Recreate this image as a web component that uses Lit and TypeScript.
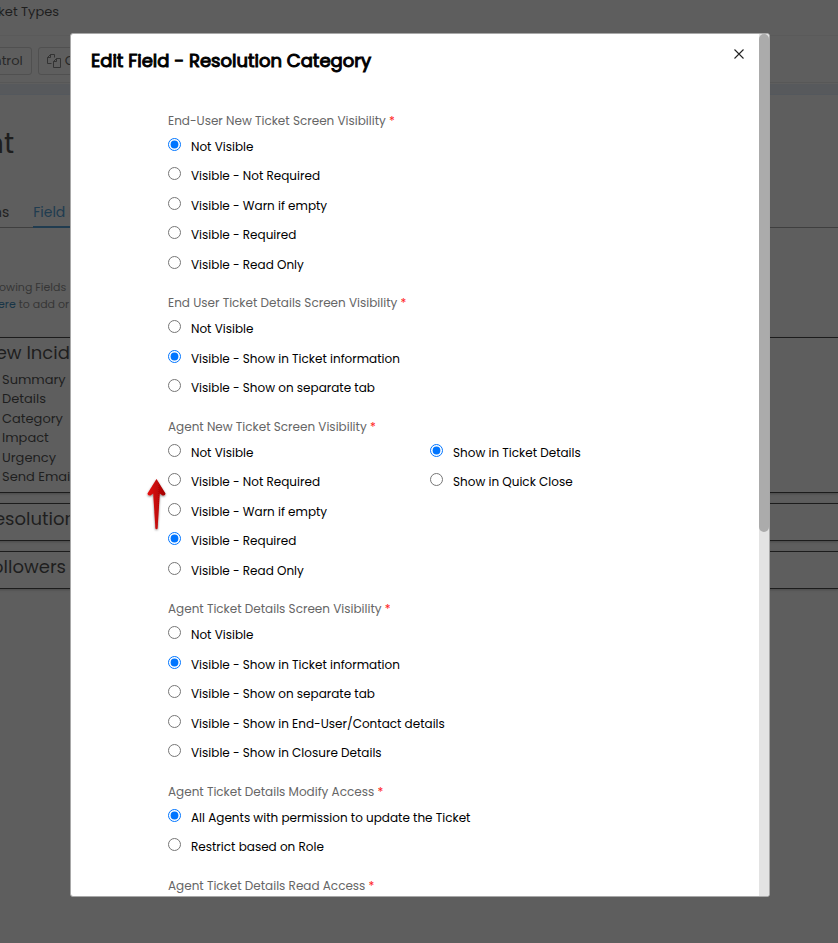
import { LitElement, html, css } from "lit";
import { customElement, property } from "lit/decorators.js";

interface Choices {
  name: string;
  selected: number;
  options: string[];
}

interface Field {
  label: string;
  columns: Choices[];
}

const fields: Field[] = [
  {
    label: "End-User New Ticket Screen Visibility",
    columns: [
      {
        name: "user-new",
        selected: 0,
        options: [
          "Not Visible",
          "Visible - Not Required",
          "Visible - Warn if empty",
          "Visible - Required",
          "Visible - Read Only",
        ],
      },
    ],
  },
  {
    label: "End User Ticket Details Screen Visibility",
    columns: [
      {
        name: "user-details",
        selected: 1,
        options: [
          "Not Visible",
          "Visible - Show in Ticket information",
          "Visible - Show on separate tab",
        ],
      },
    ],
  },
  {
    label: "Agent New Ticket Screen Visibility",
    columns: [
      {
        name: "agent-new",
        selected: 3,
        options: [
          "Not Visible",
          "Visible - Not Required",
          "Visible - Warn if empty",
          "Visible - Required",
          "Visible - Read Only",
        ],
      },
      {
        name: "agent-new-place",
        selected: 0,
        options: ["Show in Ticket Details", "Show in Quick Close"],
      },
    ],
  },
  {
    label: "Agent Ticket Details Screen Visibility",
    columns: [
      {
        name: "agent-details",
        selected: 1,
        options: [
          "Not Visible",
          "Visible - Show in Ticket information",
          "Visible - Show on separate tab",
          "Visible - Show in End-User/Contact details",
          "Visible - Show in Closure Details",
        ],
      },
    ],
  },
  {
    label: "Agent Ticket Details Modify Access",
    columns: [
      {
        name: "agent-modify",
        selected: 0,
        options: [
          "All Agents with permission to update the Ticket",
          "Restrict based on Role",
        ],
      },
    ],
  },
  {
    label: "Agent Ticket Details Read Access",
    columns: [],
  },
];

@customElement("radio-field")
class RadioField extends LitElement {
  @property({ attribute: false }) field!: Field;

  static styles = css`
    :host {
      display: block;
    }
    .group {
      margin: 0;
      padding: 0 0 9px;
      border: 0;
      min-width: 0;
    }
    .legend {
      display: block;
      padding: 0;
      height: 26px;
      line-height: 20px;
      font-size: 12px;
      color: #666;
      white-space: nowrap;
    }
    .star {
      color: #f22;
    }
    .columns {
      display: grid;
      grid-template-columns: 262px 1fr;
    }
    .option {
      display: flex;
      align-items: flex-start;
      gap: 10px;
      height: 29px;
      line-height: 20px;
      color: #000;
      white-space: nowrap;
    }
    .option:nth-child(even) {
      height: 30px;
    }
    :host(:nth-child(even)) .option:nth-child(odd) {
      height: 30px;
    }
    :host(:nth-child(even)) .option:nth-child(even) {
      height: 29px;
    }
    .radio {
      flex: none;
      width: 13px;
      height: 13px;
      margin: 1px 0 0;
      accent-color: #0075ff;
    }
  `;

  render() {
    return html`<fieldset class="group">
      <legend class="legend">
        ${this.field.label} <span class="star">*</span>
      </legend>
      <div class="columns">
        ${this.field.columns.map(
          (c) => html`<div>
            ${c.options.map(
              (o, i) => html`<label class="option"
                ><input
                  class="radio"
                  type="radio"
                  name=${c.name}
                  ?checked=${i === c.selected}
                />${o}</label
              >`
            )}
          </div>`
        )}
      </div>
    </fieldset>`;
  }
}

@customElement("ticket-page")
class TicketPage extends LitElement {
  static styles = css`
    :host {
      display: block;
      margin-left: -20px;
      color: #1e1e1e;
      font-size: 13px;
    }
    .crumbs {
      height: 35px;
      line-height: 24px;
      border-bottom: 1px solid #5a5a5a;
    }
    .toolbar {
      display: flex;
      gap: 6px;
      height: 47px;
      padding-top: 3px;
      box-sizing: border-box;
      border-bottom: 1px solid #575757;
      align-items: center;
      margin-bottom: 1px;
    }
    .tool {
      display: flex;
      align-items: center;
      gap: 4px;
      height: 28px;
      padding: 0 8px;
      border: 1px solid #505050;
      border-radius: 3px;
      background: transparent;
      color: #282828;
      font: inherit;
    }
    .first {
      padding-left: 4px;
    }
    .band {
      height: 10px;
      background: #57595c;
      border-bottom: 1px solid #54585d;
    }
    .name {
      margin: 0;
      padding: 31px 0 0 6px;
      height: 70px;
      line-height: 36px;
      font-size: 28px;
      font-weight: 400;
    }
    .tabs {
      display: flex;
      gap: 24px;
      height: 31px;
      padding-left: 4px;
      line-height: 32px;
      font-size: 14px;
      border-bottom: 1px solid #3f3f3f;
      white-space: nowrap;
    }
    .tab {
      box-sizing: border-box;
      height: 32px;
      color: #222;
      text-decoration: none;
    }
    .current {
      color: #203c50;
      border-bottom: 2px solid #203c50;
    }
    .hint {
      margin: 0;
      padding: 51px 0 24px 3px;
      line-height: 17px;
      font-size: 11px;
      color: #363636;
    }
    .link {
      padding-left: 8px;
      color: #183547;
      text-decoration: none;
    }
    .section {
      margin-bottom: 10px;
      padding-left: 3px;
      border: solid #1c1c1c;
      border-width: 1px 0;
      box-shadow: 0 1px 2px #4a4a4a;
      min-height: 36px;
    }
    .heading {
      margin: 0;
      line-height: 30px;
      font-size: 18px;
      font-weight: 400;
    }
    .list {
      margin: 0;
      padding: 2px 0 5px 19px;
      list-style: none;
      line-height: 19px;
      white-space: nowrap;
    }
    .list li:nth-child(even) {
      line-height: 20px;
    }
  `;

  render() {
    return html`
      <nav class="crumbs">Ticket Types</nav>
      <div class="toolbar">
        <button class="tool first">ontrol</button>
        <button class="tool">
          <svg width="14" height="14" viewBox="0 0 14 14" fill="none" stroke="#333">
            <path
              d="M4.5 9.5h-4v-6l3-3h4v3M3.5 .5v3h-3M6.5 13.5v-6l3-3h4v9zM9.5 4.5v3h-3"
            /></svg
          >C
        </button>
      </div>
      <div class="band"></div>
      <h1 class="name">nt</h1>
      <nav class="tabs">
        <a class="tab" href="#options">ons</a>
        <a class="tab current" href="#fields">Field List</a>
      </nav>
      <p class="hint">
        following Fields<br /><a class="link" href="#here">here</a> to add or
      </p>
      <section class="section">
        <h2 class="heading">New Incident</h2>
        <ul class="list">
          <li>Summary</li>
          <li>Details</li>
          <li>Category</li>
          <li>Impact</li>
          <li>Urgency</li>
          <li>Send Email</li>
        </ul>
      </section>
      <section class="section"><h2 class="heading">Resolution</h2></section>
      <section class="section"><h2 class="heading">Followers</h2></section>
    `;
  }
}

@customElement("app-root")
class AppRoot extends LitElement {
  static styles = css`
    :host {
      display: block;
      position: relative;
      height: 100vh;
      overflow: hidden;
      background: #5e5e5e;
      font: 12px/20px Poppins, Inter, "Open Sans", sans-serif;
    }
    .overlay {
      position: absolute;
      inset: 0;
      box-sizing: border-box;
      padding: 33px 68px 46px 70px;
    }
    .dialog {
      position: relative;
      display: flex;
      box-sizing: border-box;
      height: 100%;
      overflow: hidden;
      border: 1px solid #a8a8a8;
      border-radius: 3px;
      background: #fff;
    }
    .body {
      flex: 1;
      min-width: 0;
      overflow: hidden;
    }
    .head {
      display: flex;
      justify-content: space-between;
      align-items: flex-start;
      padding: 10px 10px 0 20px;
      height: 67px;
    }
    .title {
      margin: 0;
      line-height: 34px;
      font-size: 18px;
      font-weight: 400;
      color: #000;
      -webkit-text-stroke: 1px #000;
      white-space: nowrap;
    }
    .close {
      width: 20px;
      height: 20px;
      margin: 0;
      padding: 5px;
      border: 0;
      background: none;
    }
    .close svg {
      display: block;
    }
    .form {
      padding-left: 97px;
    }
    .track {
      flex: none;
      width: 10px;
      background: #e3e3e3;
    }
    .thumb {
      height: calc(58% - 2px);
      border-radius: 5px;
      background: #ababab;
    }
    .arrow {
      position: absolute;
      left: 74px;
      top: 443px;
    }
  `;

  render() {
    return html`
      <ticket-page></ticket-page>
      <div class="overlay">
        <div class="dialog" role="dialog" aria-labelledby="title">
          <div class="body">
            <header class="head">
              <h2 class="title" id="title">Edit Field - Resolution Category</h2>
              <button class="close" aria-label="Close">
                <svg width="10" height="10" viewBox="0 0 10 10" stroke="#222" stroke-width="1.1">
                  <path d="M.5 .5l9 9M9.5 .5l-9 9" />
                </svg>
              </button>
            </header>
            <form class="form">
              ${fields.map((f) => html`<radio-field .field=${f}></radio-field>`)}
            </form>
          </div>
          <div class="track"><div class="thumb"></div></div>
          <svg class="arrow" width="24" height="56" viewBox="0 0 24 56">
            <defs>
              <linearGradient id="red">
                <stop offset="0" stop-color="#e81010" />
                <stop offset="1" stop-color="#a00000" />
              </linearGradient>
              <filter id="shade" x="-20%" y="-10%" width="140%" height="120%">
                <feDropShadow dx="0" dy="1" stdDeviation="1" flood-opacity=".5" />
              </filter>
            </defs>
            <path
              d="M11.5 2L20.5 16.5Q20.5 19 17.5 18.5L14.8 16.5L12.6 51.5Q11.5 53 10.4 51.5L8.2 16.5L5.5 18.5Q2.5 19 2.5 16.5z"
              fill="url(#red)"
              filter="url(#shade)"
            />
          </svg>
        </div>
      </div>
    `;
  }
}
